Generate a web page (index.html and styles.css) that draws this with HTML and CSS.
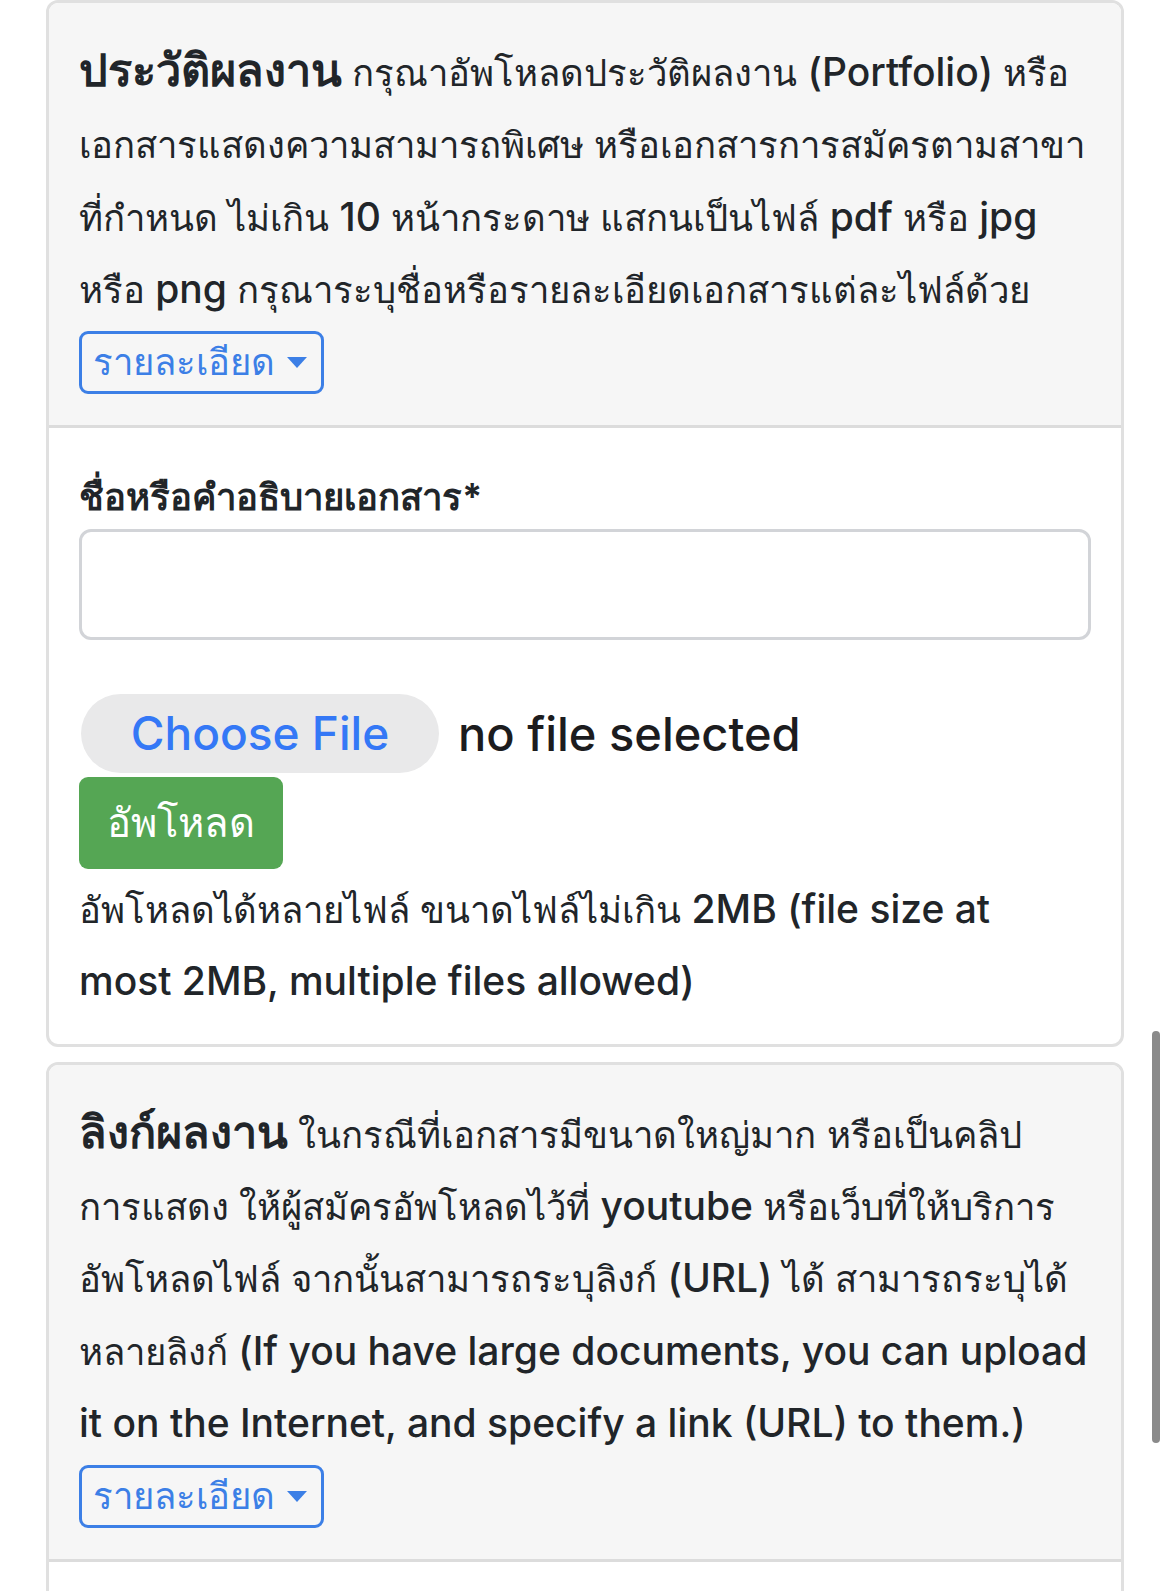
FILE: index.html
```html
<!DOCTYPE html>
<html lang="th">
<head>
<meta charset="utf-8">
<title>Portfolio upload</title>
<link rel="stylesheet" href="styles.css">
</head>
<body>
<div class="page">
  <section class="card">
    <div class="card-header">
      <p class="desc"><strong class="title">ประวัติผลงาน</strong> กรุณาอัพโหลดประวัติผลงาน <span class="en" lang="en">(Portfolio)</span> หรือ<br>เอกสารแสดงความสามารถพิเศษ หรือเอกสารการสมัครตามสาขา<br>ที่กำหนด ไม่เกิน <span class="en" lang="en">10</span> หน้ากระดาษ แสกนเป็นไฟล์ <span class="en" lang="en">pdf</span> หรือ <span class="en" lang="en">jpg</span><br>หรือ <span class="en" lang="en">png</span> กรุณาระบุชื่อหรือรายละเอียดเอกสารแต่ละไฟล์ด้วย</p>
      <button class="details-btn" type="button">รายละเอียด <span class="caret"></span></button>
    </div>
    <div class="card-body">
      <label class="field-label" for="docname">ชื่อหรือคำอธิบายเอกสาร*</label>
      <input class="text-input" id="docname" type="text">
      <div class="file-row">
        <span class="choose-btn">Choose File</span>
        <span class="file-status">no file selected</span>
      </div>
      <button class="upload-btn" type="button">อัพโหลด</button>
      <p class="help">อัพโหลดได้หลายไฟล์ ขนาดไฟล์ไม่เกิน <span class="en" lang="en">2MB (file size at</span><br><span class="en" lang="en">most 2MB, multiple files allowed)</span></p>
    </div>
  </section>
  <section class="card">
    <div class="card-header">
      <p class="desc"><strong class="title">ลิงก์ผลงาน</strong> ในกรณีที่เอกสารมีขนาดใหญ่มาก หรือเป็นคลิป<br>การแสดง ให้ผู้สมัครอัพโหลดไว้ที่ <span class="en" lang="en">youtube</span> หรือเว็บที่ให้บริการ<br>อัพโหลดไฟล์ จากนั้นสามารถระบุลิงก์ <span class="en" lang="en">(URL)</span> ได้ สามารถระบุได้<br>หลายลิงก์ <span class="en" lang="en">(If you have large documents, you can upload</span><br><span class="en" lang="en">it on the Internet, and specify a link (URL) to them.)</span></p>
      <button class="details-btn" type="button">รายละเอียด <span class="caret"></span></button>
    </div>
    <div class="card-body tall"></div>
  </section>
</div>
<div class="scrollbar"></div>
</body>
</html>
```
FILE: styles.css
```css
html, body {
  margin: 0;
  padding: 0;
  background: #ffffff;
}
body {
  font-family: "Inter", "Liberation Sans", sans-serif;
  color: #212529;
}
.page {
  padding: 0 46px;
}
.card {
  border: 3px solid #e0e0e0;
  border-radius: 12px;
  overflow: hidden;
  margin-bottom: 15px;
  background: #fff;
}
.card-header {
  background: #f6f6f6;
  padding: 34px 30px 31px;
  border-bottom: 3px solid #dcdcdc;
}
.desc {
  margin: 0;
  font-size: 36.5px;
  line-height: 72.4px;
  white-space: nowrap;
}
.en {
  font-size: 39px;
  font-weight: 500;
  line-height: 1;
}
.title {
  font-size: 45px;
  font-weight: 700;
  line-height: 1;
}
.details-btn {
  margin-top: 4px;
  display: inline-flex;
  align-items: center;
  gap: 12px;
  height: 63px;
  box-sizing: border-box;
  padding: 0 14px 0 11px;
  background: transparent;
  border: 3px solid #3c7fe6;
  border-radius: 9px;
  color: #3c7fe6;
  font-family: inherit;
  font-size: 36.5px;
  font-weight: 500;
}
.caret {
  width: 0;
  height: 0;
  border-left: 10px solid transparent;
  border-right: 10px solid transparent;
  border-top: 11px solid #3c7fe6;
}
.card-body {
  padding: 39px 30px 26px;
}
.card-body.tall {
  height: 400px;
}
.field-label {
  display: block;
  font-size: 36.5px;
  font-weight: 700;
  line-height: 60px;
  margin-bottom: 2px;
}
.text-input {
  display: block;
  width: 100%;
  box-sizing: border-box;
  height: 111px;
  border: 3px solid #d2d4d8;
  border-radius: 12px;
  background: #fff;
}
.file-row {
  margin-top: 54px;
  display: flex;
  align-items: center;
  gap: 19px;
}
.choose-btn {
  margin-left: 2px;
  height: 79px;
  width: 358px;
  box-sizing: border-box;
  display: inline-flex;
  align-items: center;
  justify-content: center;
  background: #e9e9ea;
  border-radius: 40px;
  color: #3478f6;
  font-size: 46px;
  font-weight: 500;
}
.file-status {
  font-size: 47px;
  font-weight: 500;
  color: #1c1c1e;
}
.upload-btn {
  display: block;
  margin-top: 4px;
  width: 204px;
  height: 92px;
  border: none;
  border-radius: 9px;
  background: #55a654;
  color: #ffffff;
  font-family: inherit;
  font-size: 40px;
  padding: 0;
}
.help {
  margin: 5px 0 0;
  font-size: 36.5px;
  line-height: 72px;
  white-space: nowrap;
}
.scrollbar {
  position: fixed;
  left: 1152px;
  top: 1031px;
  width: 8px;
  height: 412px;
  border-radius: 4px;
  background: #8a8a8a;
}
```
